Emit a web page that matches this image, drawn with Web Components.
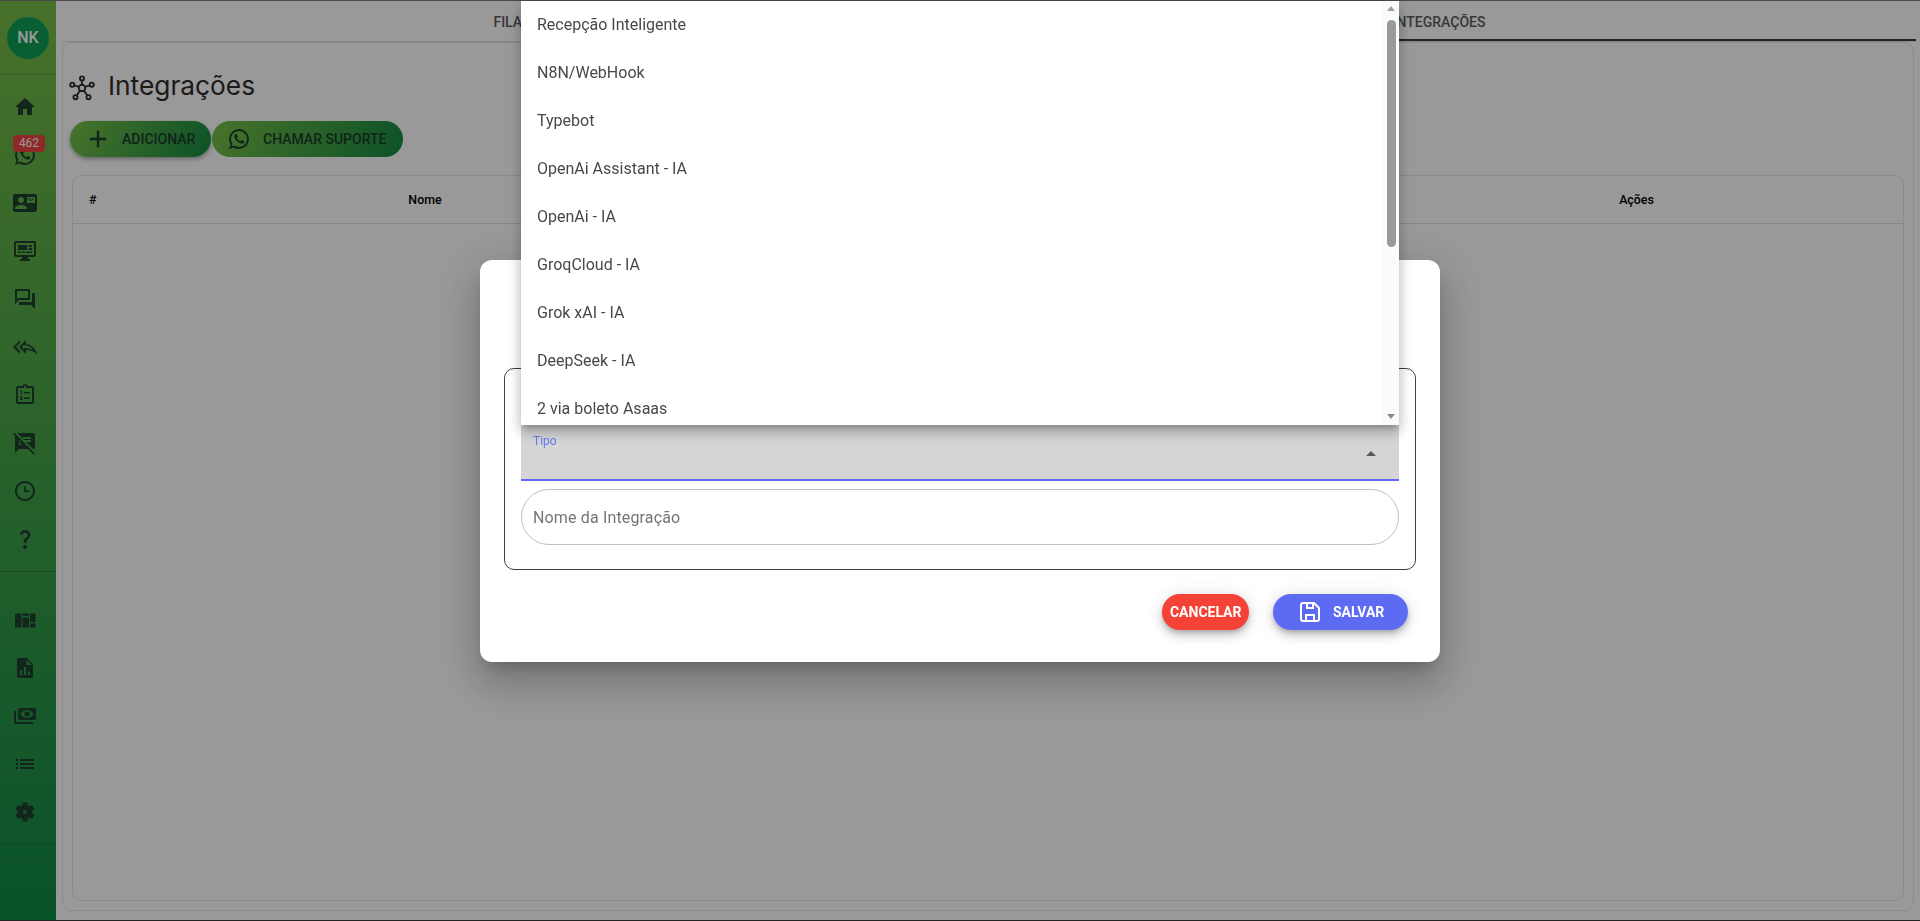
<!DOCTYPE html>
<html lang="pt-BR">
<head>
<meta charset="utf-8">
<title>Integrações</title>
<style>
  html, body { margin: 0; height: 100%; overflow: hidden; background: #fff; font-family: Roboto, "Liberation Sans", sans-serif; }
  app-shell { height: 921px; }
</style>
</head>
<body>
<app-shell>
  <side-nav></side-nav>
  <main-area></main-area>
</app-shell>
<modal-backdrop>
  <integration-dialog></integration-dialog>
</modal-backdrop>

<script>
const ICONS = {
  home: '<path d="M10 20v-6h4v6h5v-8h3L12 3 2 12h3v8z"/>',
  whatsapp: '<path d="M16.75 13.96c.25.13.41.2.46.3.06.11.04.61-.21 1.18-.2.56-1.24 1.1-1.7 1.12-.46.02-.47.36-2.96-.73-2.49-1.09-3.99-3.75-4.11-3.92-.12-.17-.96-1.38-.92-2.61.05-1.22.69-1.8.95-2.04.24-.26.51-.29.68-.26h.47c.15 0 .36-.06.55.45l.69 1.87c.06.13.1.28.01.44l-.27.41-.39.42c-.12.12-.26.25-.12.5.12.26.62 1.09 1.32 1.78.91.88 1.71 1.17 1.95 1.3.24.14.39.12.54-.04l.81-.94c.19-.25.35-.19.58-.11l1.67.88M12 2a10 10 0 0 1 10 10 10 10 0 0 1-10 10c-1.97 0-3.8-.57-5.35-1.55L2 22l1.55-4.65A9.969 9.969 0 0 1 2 12 10 10 0 0 1 12 2m0 2a8 8 0 0 0-8 8c0 1.72.54 3.31 1.46 4.61L4.5 19.5l2.89-.96A7.95 7.95 0 0 0 12 20a8 8 0 0 0 8-8 8 8 0 0 0-8-8z"/>',
  contact: '<path d="M21 8V7l-3 2-3-2v1l3 2 3-2zm1-5H2C.9 3 0 3.9 0 5v14c0 1.1.9 2 2 2h20c1.1 0 1.99-.9 1.99-2L24 5c0-1.1-.9-2-2-2zM8 6c1.66 0 3 1.34 3 3s-1.34 3-3 3-3-1.34-3-3 1.34-3 3-3zm6 12H2v-1c0-2 4-3.1 6-3.1s6 1.1 6 3.1v1zm8-6h-8V6h8v6z"/>',
  monitor: '<path d="M21 2H3c-1.1 0-2 .9-2 2v12c0 1.1.9 2 2 2h6v2H7v2h10v-2h-2v-2h6c1.1 0 2-.9 2-2V4c0-1.1-.9-2-2-2zm0 14H3V4h18v12z"/><path d="M5 6h9v5H5zM15.500 6H19v2h-3.500zM15.500 9H19v2h-3.500zM5 12.500h3V14H5zM9 12.500h3V14H9zM13 12.500h6V14h-6z"/>',
  forum: '<path d="M15 4v7H5.170L4 12.170V4h11m1-2H3c-.55 0-1 .45-1 1v14l4-4h10c.55 0 1-.45 1-1V3c0-.55-.45-1-1-1zm5 4h-2v9H6v2c0 .55.45 1 1 1h11l4 4V7c0-.55-.45-1-1-1z"/>',
  replyAll: '<path fill-rule="evenodd" d="M7 8V5l-7 7 7 7v-3l-4-4 4-4zm6 1V5l-7 7 7 7v-4.100c5 0 8.500 1.600 11 5.100-1-5-4-10-11-11zM11 9.800L8.800 12l2.200 2.200V13c3.500 0 6.500.7 9 2.300-1.600-2.800-4.300-4.900-9-5.500z"/>',
  tasks: '<path d="M19 3h-4.180C14.400 1.840 13.300 1 12 1s-2.400.84-2.820 2H5c-1.100 0-2 .9-2 2v14c0 1.100.9 2 2 2h14c1.100 0 2-.9 2-2V5c0-1.100-.9-2-2-2zm-7 0c.55 0 1 .45 1 1s-.45 1-1 1-1-.45-1-1 .45-1 1-1zm7 16H5V5h14v14z"/><path d="M7 8.500l1.200-1H9v4H7.800V8.700L7 9.300zM7 13.300h2.500v1.200H8.500l1 1.300V17H7v-1h1.300L7 14.500zM11 9h6v1.500h-6zM11 14.500h6V16h-6z"/>',
  notesOff: '<path d="M10.540 11l-.54-.54L7.540 8 6 6.460 2.380 2.840 1.270 1.730 0 3l2.010 2.010L2 22l4-4h9l5.730 5.730L22 22.460 17.540 18l-7-7zM8 14H6v-2h2v2zm-2-3V9l2 2H6zm14-9H4.080L10 7.920V6h8v2h-7.920l1 1H18v2h-4.920l6.990 6.990C21.140 17.950 22 17.080 22 16V4c0-1.100-.9-2-2-2z"/>',
  clock: '<path d="M11.990 2C6.470 2 2 6.480 2 12s4.470 10 9.990 10C17.520 22 22 17.520 22 12S17.520 2 11.990 2zM12 20c-4.420 0-8-3.580-8-8s3.580-8 8-8 8 3.580 8 8-3.580 8-8 8z"/><path d="M11.200 7h1.600v4.500H16.500v1.500h-5.300z"/>',
  help: '<path d="M11.070 12.850c.77-1.390 2.250-2.210 3.110-3.440.91-1.290.4-3.700-2.180-3.700-1.690 0-2.520 1.280-2.870 2.340L6.540 6.960C7.250 4.830 9.180 3 11.990 3c2.350 0 3.960 1.070 4.780 2.410.7 1.150 1.110 3.300.03 4.900-1.200 1.770-2.350 2.310-2.970 3.450-.25.46-.35.76-.35 2.240h-2.890c-.01-.78-.13-2.050.48-3.150zM14 20c0 1.100-.9 2-2 2s-2-.9-2-2 .9-2 2-2 2 .9 2 2z"/>',
  quilt: '<path d="M2 5.500h6.500v14H2zM9.500 5.500h6.500v2.500H9.500zM9.500 9.500h6.500v10H9.500zM17 5.500h5.500v8.500H17zM17 15.500h5.500v4H17z"/>',
  report: '<path fill-rule="evenodd" d="M6 2h8l6 6v12c0 1.100-.9 2-2 2H6c-1.100 0-2-.9-2-2V4c0-1.100.9-2 2-2zM13.500 3.500V9H19zM7 14v5h2v-5zM11 11v8h2v-8zM15 15.500V19h2v-3.500z"/>',
  money: '<g transform="matrix(-1 0 0 1 24 0)"><path fill-rule="evenodd" d="M3 4h14c1.100 0 2 .9 2 2v8c0 1.100-.9 2-2 2H3c-1.100 0-2-.9-2-2V6c0-1.100.9-2 2-2zM10 6C7 6 4.500 8 3.500 10c1 2 3.500 4 6.500 4s5.500-2 6.500-4c-1-2-3.500-4-6.500-4z"/><circle cx="10" cy="10" r="2.600"/><path d="M23 7v11c0 1.100-.9 2-2 2H4v-2h17V7z"/></g>',
  list: '<path d="M3 13h2v-2H3v2zm0 4h2v-2H3v2zm0-8h2V7H3v2zm4 4h14v-2H7v2zm0 4h14v-2H7v2zM7 7v2h14V7H7z"/>',
  gear: '<path fill-rule="evenodd" d="M19.140 12.940c.04-.3.06-.61.06-.94 0-.32-.02-.64-.07-.94l2.030-1.580c.18-.14.23-.41.12-.61l-1.920-3.320c-.12-.22-.37-.29-.59-.22l-2.390.96c-.5-.38-1.030-.7-1.620-.94l-.36-2.540c-.04-.24-.24-.41-.48-.41h-3.840c-.24 0-.43.17-.47.41l-.36 2.540c-.59.24-1.130.57-1.620.94l-2.390-.96c-.22-.08-.47 0-.59.22L2.740 8.870c-.12.21-.08.47.12.61l2.030 1.580c-.05.3-.09.63-.09.94s.02.64.07.94l-2.030 1.580c-.18.14-.23.41-.12.61l1.920 3.320c.12.22.37.29.59.22l2.390-.96c.5.38 1.030.7 1.620.94l.36 2.540c.05.24.24.41.48.41h3.840c.24 0 .44-.17.47-.41l.36-2.540c.59-.24 1.130-.56 1.620-.94l2.390.96c.22.08.47 0 .59-.22l1.920-3.320c.12-.22.07-.47-.12-.61l-2.010-1.580zM12 10c-1.100 0-2 .9-2 2s.9 2 2 2 2-.9 2-2-.9-2-2-2z"/>',
  plus: '<path d="M19 13h-6v6h-2v-6H5v-2h6V5h2v6h6v2z"/>',
  save: '<path fill="none" stroke="currentColor" stroke-width="2" stroke-linejoin="round" d="M5 3h11l5 5v11a2 2 0 0 1-2 2H5a2 2 0 0 1-2-2V5a2 2 0 0 1 2-2z"/><path fill="none" stroke="currentColor" stroke-width="2" d="M9 3v5h6V3M8 21v-6h8v6"/>',
  hub: '<g fill="none" stroke="currentColor" stroke-width="1.700"><circle cx="12" cy="12" r="3"/><circle cx="12" cy="3.200" r="1.900"/><circle cx="3" cy="9" r="1.900"/><circle cx="21" cy="9" r="1.900"/><circle cx="6" cy="20.500" r="1.900"/><circle cx="18" cy="20.500" r="1.900"/><path d="M12 5.100V9M4.800 9.600l4.400 1.400M19.200 9.600L14.800 11M7.100 19l3.100-4.600M16.900 19l-3.100-4.600"/></g>'
};

function svg(name, size) {
  return `<svg viewBox="0 0 24 24" width="${size}" height="${size}" fill="currentColor" aria-hidden="true">${ICONS[name]}</svg>`;
}

class AppShell extends HTMLElement {
  constructor() {
    super();
    this.attachShadow({ mode: "open" });
    this.shadowRoot.innerHTML = `
    <style>
      :host { display: flex; width: 100%; background: #fff; }
    </style>
    <slot></slot>`;
  }
}

class NavItem extends HTMLElement {
  constructor() {
    super();
    this.attachShadow({ mode: "open" });
  }
  connectedCallback() {
    const badge = this.getAttribute("badge");
    this.shadowRoot.innerHTML = `
    <style>
      :host { display: flex; align-items: center; height: 48px; padding-left: 13px; color: #1f4030; position: relative; }
      svg { display: block; }
      span {
        position: absolute; left: 13px; top: 4px; width: 32px; height: 17px;
        background: #ee4444; color: #fff; font: 400 12px/17px Roboto, sans-serif; text-align: center; border-radius: 4px;
      }
    </style>
    ${svg(this.getAttribute("icon"), 24)}${badge ? `<span>${badge}</span>` : ""}`;
  }
}

class SideNav extends HTMLElement {
  constructor() {
    super();
    this.attachShadow({ mode: "open" });
    const top = ["home", "whatsapp", "contact", "monitor", "forum", "replyAll", "tasks", "notesOff", "clock", "help"];
    const bottom = ["quilt", "report", "money", "list", "gear"];
    const row = (n) => `<nav-item icon="${n}"${n === "whatsapp" ? ' badge="462"' : ""}></nav-item>`;
    this.shadowRoot.innerHTML = `
    <style>
      :host {
        display: block; flex: 0 0 56px; width: 56px; height: 921px; box-sizing: border-box;
        background: linear-gradient(180deg, #78bc48 0%, #0f8a47 100%);
      }
      .head { height: 75px; box-sizing: border-box; padding: 17px 0 0 7px; border-bottom: 1px solid rgba(0,0,0,.14); }
      .avatar {
        width: 42px; height: 42px; border-radius: 50%; background: #109f58; color: #fff;
        font: 500 16px/42px Roboto, sans-serif; text-align: center;
      }
      .list { padding: 8px 0; border-bottom: 1px solid rgba(0,0,0,.14); }
      .list.second { padding-top: 24px; }
    </style>
    <div class="head"><div class="avatar">NK</div></div>
    <div class="list">${top.map(row).join("")}</div>
    <div class="list second">${bottom.map(row).join("")}</div>`;
  }
}

class PillAction extends HTMLElement {
  constructor() {
    super();
    this.attachShadow({ mode: "open" });
    this.shadowRoot.innerHTML = `
    <style>
      :host {
        display: inline-flex; align-items: center; box-sizing: border-box; height: 36px; border-radius: 18px;
        font: 500 14px/36px Roboto, sans-serif; white-space: nowrap; text-transform: uppercase;
        background: var(--pill-bg); color: var(--pill-fg, #1c3d2a); box-shadow: var(--pill-shadow, none);
        padding: var(--pill-pad, 0 16px); gap: var(--pill-gap, 0);
      }
      ::slotted(span) { display: block; line-height: 0; }
    </style>
    <slot name="icon"></slot><slot></slot>`;
  }
}

class DataHead extends HTMLElement {
  constructor() {
    super();
    this.attachShadow({ mode: "open" });
    this.shadowRoot.innerHTML = `
    <style>
      :host {
        display: grid; grid-template-columns: 157px 390px 750px 533px; height: 47px; align-items: center;
        border-bottom: 1px solid #e0e0e0; color: #000; font: 500 12.400px Roboto, sans-serif; text-align: center;
      }
      .num { text-align: left; padding-left: 16px; }
    </style>
    <div class="num">#</div><div>Nome</div><div></div><div>Ações</div>`;
  }
}

class MainArea extends HTMLElement {
  constructor() {
    super();
    this.attachShadow({ mode: "open" });
    const grad = "linear-gradient(115deg, #78c048 0%, #158a42 100%)";
    this.shadowRoot.innerHTML = `
    <style>
      :host { display: block; flex: 1; min-width: 0; padding: 5px 6px 10px 6px; box-sizing: border-box; height: 921px; background: #fff; }
      .tabs {
        display: grid; grid-template-columns: 904px 950px; height: 37px; box-sizing: border-box; margin-right: -2px;
        border-bottom: 1px solid #e0e0e0; border-radius: 10px 10px 0 0;
        font: 500 14px/34px Roboto, sans-serif; color: #5c5c5c; text-align: center;
      }
      .tab { height: 36px; box-sizing: border-box; padding-right: 4px; }
      .tab.on { border-bottom: 2px solid #3a3a3a; padding-right: 4px; }
      .paper {
        border: 1px solid #e6e6e6; border-radius: 10px; height: 869px; box-sizing: border-box; padding: 0 9px 9px 9px;
        display: flex; flex-direction: column;
      }
      h1 {
        margin: 0 0 0 -3px; height: 78px; display: flex; align-items: flex-end; gap: 13px; box-sizing: border-box; padding-bottom: 18px;
        font: 400 26.300px/34px Inter, sans-serif; color: #2e2e2e;
      }
      h1 svg { display: block; margin: 0 0 2px 0; }
      .actions { display: flex; gap: 1px; margin: 0 0 18px -2px; --pill-bg: ${grad}; }
      .add { --pill-pad: 0 0 0 14px; --pill-gap: 10px; width: 141px; --pill-shadow: 0 2px 4px rgba(0,0,0,.35); }
      .call { --pill-pad: 0 0 0 15px; --pill-gap: 12px; width: 191px; }
      .table { flex: 1; border: 1px solid #e6e6e6; border-radius: 10px; }
    </style>
    <div class="tabs"><div class="tab">FILAS</div><div class="tab on">INTEGRAÇÕES</div></div>
    <div class="paper">
      <h1>${svg("hub", 26)}<span>Integrações</span></h1>
      <div class="actions">
        <pill-action class="add"><span slot="icon">${svg("plus", 28)}</span>Adicionar</pill-action>
        <pill-action class="call"><span slot="icon">${svg("whatsapp", 24)}</span>Chamar suporte</pill-action>
      </div>
      <div class="table"><data-head></data-head></div>
    </div>`;
  }
}

class ModalBackdrop extends HTMLElement {
  constructor() {
    super();
    this.attachShadow({ mode: "open" });
    this.shadowRoot.innerHTML = `
    <style>
      :host {
        position: fixed; inset: 0; display: flex; align-items: center; justify-content: center;
        background: rgba(0,0,0,.4); backdrop-filter: blur(.6px);
      }
      .edge { position: absolute; left: 0; right: 0; height: 1px; background: #4a4a4a; }
      .edge.top { top: 0; }
      .edge.bottom { bottom: 0; background: #222; }
    </style>
    <slot></slot><div class="edge top"></div><div class="edge bottom"></div>`;
  }
}

class SelectMenu extends HTMLElement {
  constructor() {
    super();
    this.attachShadow({ mode: "open" });
    const items = ["Recepção Inteligente", "N8N/WebHook", "Typebot", "OpenAi Assistant - IA", "OpenAi - IA", "GroqCloud - IA", "Grok xAI - IA", "DeepSeek - IA", "2 via boleto Asaas"];
    this.shadowRoot.innerHTML = `
    <style>
      :host {
        position: absolute; left: 0; right: 0; bottom: 100%; height: 424px; overflow: hidden; z-index: 2;
        background: #fff; color: #484848; font: 400 16px/48px Roboto, sans-serif;
        box-shadow: 0 5px 5px -3px rgba(0,0,0,.2), 0 8px 10px 1px rgba(0,0,0,.14), 0 3px 14px 2px rgba(0,0,0,.12);
      }
      .item { height: 48px; padding-left: 16px; }
      .bar { position: absolute; top: 0; right: 0; bottom: 0; width: 17px; background: #fbfbfb; }
      .thumb { position: absolute; left: 5px; top: 19px; width: 9px; height: 227px; border-radius: 5px; background: #9a9a9a; }
      .up, .down { position: absolute; left: 5px; width: 0; height: 0; border-left: 4.500px solid transparent; border-right: 4.500px solid transparent; }
      .up { top: 5px; border-bottom: 5px solid #a0a0a0; }
      .down { bottom: 6px; border-top: 5px solid #8a8a8a; }
    </style>
    ${items.map((t) => `<div class="item">${t}</div>`).join("")}
    <div class="bar"><div class="up"></div><div class="thumb"></div><div class="down"></div></div>`;
  }
}

class SelectField extends HTMLElement {
  constructor() {
    super();
    this.attachShadow({ mode: "open" });
    this.shadowRoot.innerHTML = `
    <style>
      :host { display: block; position: relative; height: 56px; box-sizing: border-box; background: #d5d5d5; border-bottom: 2px solid #5d6bf2; }
      label { position: absolute; left: 12px; top: 8px; font: 400 12px/16px Roboto, sans-serif; color: #6a78f6; }
      .caret { position: absolute; right: 23px; top: 26px; width: 0; height: 0; border-left: 5px solid transparent; border-right: 5px solid transparent; border-bottom: 5px solid #5a5a5a; }
    </style>
    <label>Tipo</label><div class="caret"></div><slot></slot>`;
  }
}

class RoundInput extends HTMLElement {
  constructor() {
    super();
    this.attachShadow({ mode: "open" });
    this.shadowRoot.innerHTML = `
    <style>
      :host { display: flex; align-items: center; height: 56px; box-sizing: border-box; border: 1px solid #c0c0c0; border-radius: 28px; padding-left: 11px; font: 400 16px Roboto, sans-serif; letter-spacing: .15px; color: #757575; }
    </style>
    <slot></slot>`;
  }
}

class IntegrationDialog extends HTMLElement {
  constructor() {
    super();
    this.attachShadow({ mode: "open" });
    const lift = "0 3px 5px -1px rgba(0,0,0,.2), 0 6px 10px 0 rgba(0,0,0,.14), 0 1px 18px 0 rgba(0,0,0,.12)";
    this.shadowRoot.innerHTML = `
    <style>
      :host {
        display: block; box-sizing: border-box; width: 960px; height: 402px; margin-top: 1px; background: #fff; border-radius: 12px; padding: 108px 32px 0 24px; position: relative;
        box-shadow: 0 11px 15px -7px rgba(0,0,0,.2), 0 24px 38px 3px rgba(0,0,0,.14), 0 9px 46px 8px rgba(0,0,0,.12);
      }
      .box { border: 1px solid #3f3f3f; border-radius: 10px; height: 202px; box-sizing: border-box; margin-right: -8px; padding: 56px 16px 0; display: flex; flex-direction: column; gap: 8px; }
      .foot { display: flex; justify-content: flex-end; gap: 24px; margin-top: 24px; }
      pill-action { font-weight: 700; }
      .cancel { --pill-bg: #f44336; --pill-fg: #fff; --pill-pad: 0 7.500px; --pill-shadow: ${lift}; }
      .save { --pill-bg: #5d6bf2; --pill-fg: #fff; --pill-pad: 0 0 0 25px; --pill-gap: 11px; --pill-shadow: ${lift}; width: 135px; }
    </style>
    <div class="box">
      <select-field><select-menu></select-menu></select-field>
      <round-input>Nome da Integração</round-input>
    </div>
    <div class="foot">
      <pill-action class="cancel">Cancelar</pill-action>
      <pill-action class="save"><span slot="icon">${svg("save", 24)}</span>Salvar</pill-action>
    </div>`;
  }
}

customElements.define("app-shell", AppShell);
customElements.define("nav-item", NavItem);
customElements.define("side-nav", SideNav);
customElements.define("pill-action", PillAction);
customElements.define("data-head", DataHead);
customElements.define("main-area", MainArea);
customElements.define("modal-backdrop", ModalBackdrop);
customElements.define("select-menu", SelectMenu);
customElements.define("select-field", SelectField);
customElements.define("round-input", RoundInput);
customElements.define("integration-dialog", IntegrationDialog);
</script>
</body>
</html>
